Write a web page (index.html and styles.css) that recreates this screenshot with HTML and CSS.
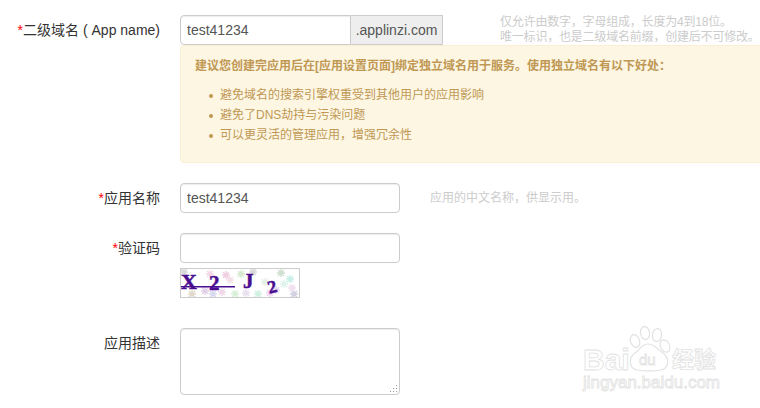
FILE: index.html
```html
<!DOCTYPE html>
<html lang="zh-CN">
<head>
    <meta charset="UTF-8">
    <meta name="viewport" content="width=device-width, initial-scale=1.0">
    <title>创建应用</title>
    <link rel="stylesheet" href="styles.css">
</head>
<body>
    <form class="app-form">
        <!-- 二级域名 -->
        <div class="row">
            <label class="label"><span class="req">*</span>二级域名 ( App name)</label>
            <div class="field">
                <div class="field-line">
                    <div class="input-group">
                        <input class="input input-left" type="text" value="test41234">
                        <span class="addon">.applinzi.com</span>
                    </div>
                    <div class="help help-domain">仅允许由数字，字母组成，长度为4到18位。<br>唯一标识，也是二级域名前缀，创建后不可修改。</div>
                </div>
                <div class="alert">
                    <div class="alert-title">建议您创建完应用后在[应用设置页面]绑定独立域名用于服务。使用独立域名有以下好处：</div>
                    <ul class="alert-list">
                        <li>避免域名的搜索引擎权重受到其他用户的应用影响</li>
                        <li>避免了DNS劫持与污染问题</li>
                        <li>可以更灵活的管理应用，增强冗余性</li>
                    </ul>
                </div>
            </div>
        </div>

        <!-- 应用名称 -->
        <div class="row">
            <label class="label"><span class="req">*</span>应用名称</label>
            <div class="field">
                <div class="field-line">
                    <input class="input" type="text" value="test41234">
                    <div class="help">应用的中文名称，供显示用。</div>
                </div>
            </div>
        </div>

        <!-- 验证码 -->
        <div class="row row-captcha">
            <label class="label"><span class="req">*</span>验证码</label>
            <div class="field">
                <input class="input" type="text">
                <svg class="captcha" width="120" height="30" viewBox="0 0 120 30">
                    <defs>
                        <path id="speck" d="M-3 -3L3 3M3 -3L-3 3M0 -4V4M-4 0H4" stroke-width="1.4" fill="none"/>
                    </defs>
                    <use href="#speck" x="4" y="4" stroke="#d8d8d8"/>
                    <use href="#speck" x="12" y="26" stroke="#e0d8c8"/>
                    <use href="#speck" x="25" y="23" stroke="#e0d0e8"/>
                    <use href="#speck" x="30" y="6" stroke="#f4d8e8"/>
                    <use href="#speck" x="33" y="26" stroke="#d8d8f0"/>
                    <use href="#speck" x="42" y="24" stroke="#f0d8e8"/>
                    <use href="#speck" x="46" y="7" stroke="#f0d0e0"/>
                    <use href="#speck" x="50" y="12" stroke="#f4e0e8"/>
                    <use href="#speck" x="55" y="26" stroke="#d8f0d8"/>
                    <use href="#speck" x="61" y="6" stroke="#d8e8d0"/>
                    <use href="#speck" x="66" y="25" stroke="#e8e0f0"/>
                    <use href="#speck" x="73" y="4" stroke="#d8d8d8"/>
                    <use href="#speck" x="78" y="26" stroke="#d0f0e0"/>
                    <use href="#speck" x="85" y="14" stroke="#e4f0e4"/>
                    <use href="#speck" x="90" y="25" stroke="#f0d0f0"/>
                    <use href="#speck" x="96" y="22" stroke="#e8d8f0"/>
                    <use href="#speck" x="101" y="5" stroke="#d0e0d0"/>
                    <use href="#speck" x="104" y="16" stroke="#e0f4ec"/>
                    <use href="#speck" x="110" y="11" stroke="#c8f0e8"/>
                    <use href="#speck" x="114" y="26" stroke="#d0d0e0"/>
                    <use href="#speck" x="112" y="20" stroke="#f0e0f0"/>
                    <g class="captcha-text">
                        <text x="1" y="21" font-size="22" transform="translate(0 0)">X</text>
                        <text x="29" y="22" font-size="21">2</text>
                        <text x="63" y="20" font-size="21">J</text>
                        <text x="88" y="24" font-size="18" transform="rotate(-14 96 20)">2</text>
                    </g>
                    <rect x="0" y="18" width="55" height="1.5" fill="#4b0d8f"/>
                    <rect x="0.5" y="0.5" width="119" height="29" fill="none" stroke="#ccc"/>
                </svg>
            </div>
        </div>

        <!-- 应用描述 -->
        <div class="row">
            <label class="label">应用描述</label>
            <div class="field">
                <div class="textarea-wrap">
                    <textarea class="input textarea"></textarea>
                    <svg class="grip" width="10" height="10" viewBox="0 0 10 10" fill="#999">
                        <rect x="7" y="1" width="1" height="1"/>
                        <rect x="4" y="4" width="1" height="1"/><rect x="7" y="4" width="1" height="1"/>
                        <rect x="1" y="7" width="1" height="1"/><rect x="4" y="7" width="1" height="1"/><rect x="7" y="7" width="1" height="1"/>
                    </svg>
                </div>
            </div>
        </div>
    </form>

    <!-- 水印 -->
    <svg class="watermark" width="150" height="80" viewBox="0 0 150 80">
        <g fill="#fff" stroke="#e2e2e2" stroke-width="1.2">
            <ellipse cx="53" cy="15" rx="4.5" ry="6.5" transform="rotate(-20 53 15)"/>
            <ellipse cx="63" cy="7" rx="4.5" ry="6.5" transform="rotate(-8 63 7)"/>
            <ellipse cx="75" cy="9" rx="4.5" ry="6.5" transform="rotate(10 75 9)"/>
            <ellipse cx="83" cy="20" rx="4.5" ry="6.5" transform="rotate(-25 83 20)"/>
            <path d="M66 18 C59 18 58 24 53 27 C47 31 46 42 55 44 C62 45 72 45 79 44 C88 42 87 31 81 27 C76 24 73 18 66 18 Z"/>
        </g>
        <g class="mark-text">
            <text x="1" y="44" font-size="30" font-weight="700">Bai</text>
            <text x="57" y="39" font-size="15">du</text>
            <text x="90" y="41" font-size="22" font-weight="700">经验</text>
            <text x="1" y="62" font-size="17">jingyan.baidu.com</text>
        </g>
    </svg>
</body>
</html>
```

FILE: styles.css
```css
* {
    box-sizing: border-box;
}

html, body {
    margin: 0;
    padding: 0;
    height: 100%;
    overflow: hidden;
    background: #fff;
    font-family: "Liberation Sans", "Noto Sans CJK SC", sans-serif;
    font-size: 14px;
    color: #333;
}

body {
    position: relative;
}

.app-form {
    padding-top: 15px;
    width: 760px;
}

.row {
    display: flex;
    margin-bottom: 20px;
}

.row-captcha {
    margin-bottom: 30px;
}

.label {
    flex: none;
    width: 160px;
    margin-right: 20px;
    text-align: right;
    line-height: 30px;
    white-space: nowrap;
}

.req {
    color: #f00;
}

.field {
    flex: none;
    width: 580px;
}

.field-line {
    display: flex;
    align-items: center;
}

.input {
    display: block;
    width: 220px;
    height: 30px;
    padding: 4px 6px;
    border: 1px solid #ccc;
    border-radius: 4px;
    box-shadow: inset 0 1px 1px rgba(0, 0, 0, 0.075);
    font-family: inherit;
    font-size: 14px;
    color: #555;
    background: #fff;
    outline: none;
}

.input-group {
    display: flex;
    flex: none;
}

.input-left {
    width: 171px;
    border-radius: 4px 0 0 4px;
}

.addon {
    width: 92px;
    height: 30px;
    line-height: 28px;
    text-align: center;
    border: 1px solid #ccc;
    border-left: 0;
    background: #eee;
    color: #555;
    white-space: nowrap;
}

.help {
    margin-left: 30px;
    font-size: 12px;
    line-height: 15px;
    color: #ccc;
    white-space: nowrap;
}

.help-domain {
    margin-left: 57px;
    letter-spacing: -0.2px;
}

.alert {
    width: 600px;
    height: 118px;
    padding: 11px 14px;
    background: #fcf6e3;
    border: 1px solid #fbeed5;
    border-radius: 4px;
    font-size: 12px;
    color: #c09853;
}

.alert-title {
    font-weight: 700;
    line-height: 18px;
}

.alert-list {
    margin: 10px 0 0;
    padding: 0 0 0 25px;
    line-height: 20px;
    list-style: none;
}

.alert-list li::before {
    content: '';
    display: inline-block;
    width: 4px;
    height: 4px;
    margin: 0 7px 0 -11px;
    border-radius: 50%;
    background: #c09853;
    vertical-align: middle;
}

.captcha {
    display: block;
    margin-top: 5px;
}

.captcha-text {
    font-family: "Liberation Serif", serif;
    font-weight: 700;
    fill: #4b0d8f;
    stroke: #4b0d8f;
    stroke-width: 0.5;
}

.textarea-wrap {
    position: relative;
    width: 220px;
}

.textarea {
    height: 67px;
    resize: none;
}

.grip {
    position: absolute;
    right: 1px;
    bottom: 1px;
}

.watermark {
    position: absolute;
    left: 582px;
    top: 326px;
}

.mark-text {
    font-family: "Liberation Sans", "Noto Sans CJK SC", sans-serif;
    fill: #fff;
    stroke: #e2e2e2;
    stroke-width: 0.8;
}
```
